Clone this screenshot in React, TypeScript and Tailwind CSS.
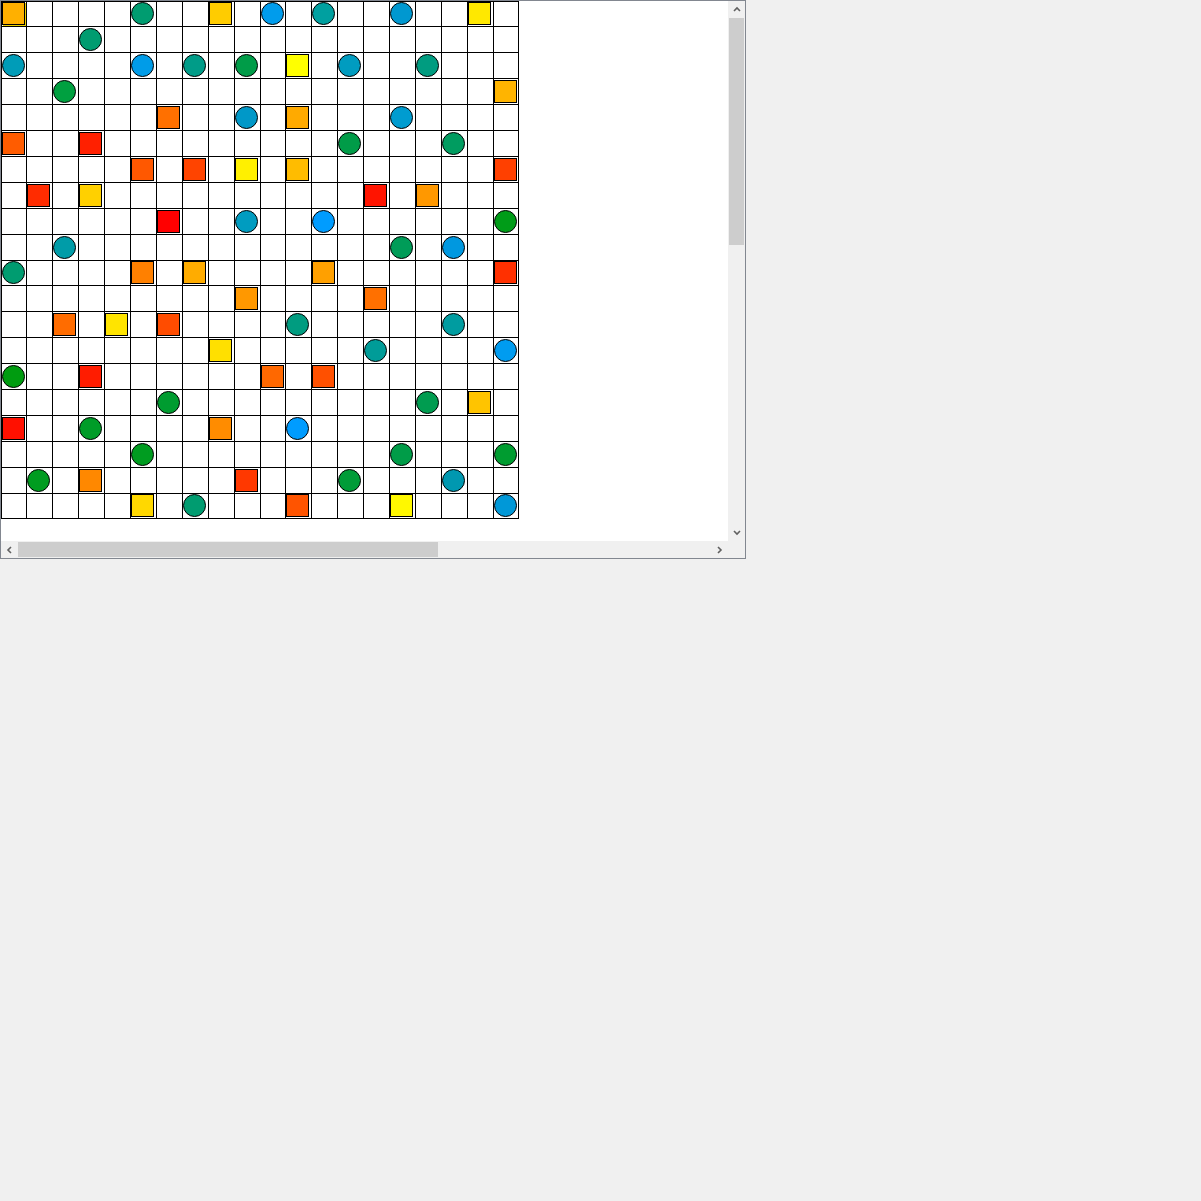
import React from "react";

type Cell = { kind: "sq" | "ci"; color: string } | null;

// row, col, kind, colour
const pieces: [number, number, "sq" | "ci", string][] = [
  [0, 0, "sq", "#ffb000"], [0, 5, "ci", "#009c70"], [0, 8, "sq", "#ffcc00"], [0, 10, "ci", "#009cec"],
  [0, 12, "ci", "#00a0a0"], [0, 15, "ci", "#0098d0"], [0, 18, "sq", "#ffe800"],
  [1, 3, "ci", "#009c70"],
  [2, 0, "ci", "#009cb8"], [2, 5, "ci", "#009ce8"], [2, 7, "ci", "#009c88"], [2, 9, "ci", "#009c48"],
  [2, 11, "sq", "#ffff00"], [2, 13, "ci", "#009cc0"], [2, 16, "ci", "#009c80"],
  [3, 2, "ci", "#00a040"], [3, 19, "sq", "#ffb400"],
  [4, 6, "sq", "#ff7000"], [4, 9, "ci", "#0098c8"], [4, 11, "sq", "#ffaa00"], [4, 15, "ci", "#009cd0"],
  [5, 0, "sq", "#ff5c00"], [5, 3, "sq", "#ff2000"], [5, 13, "ci", "#009c48"], [5, 17, "ci", "#009c60"],
  [6, 5, "sq", "#ff5800"], [6, 7, "sq", "#ff4400"], [6, 9, "sq", "#fff000"], [6, 11, "sq", "#ffbc00"],
  [6, 19, "sq", "#ff4000"],
  [7, 1, "sq", "#ff2c00"], [7, 3, "sq", "#ffd000"], [7, 14, "sq", "#ff1400"], [7, 16, "sq", "#ff9800"],
  [8, 6, "sq", "#ff0000"], [8, 9, "ci", "#009cc0"], [8, 12, "ci", "#009cff"], [8, 19, "ci", "#009c18"],
  [9, 2, "ci", "#009ca8"], [9, 15, "ci", "#009c58"], [9, 17, "ci", "#0098e0"],
  [10, 0, "ci", "#009c70"], [10, 5, "sq", "#ff8000"], [10, 7, "sq", "#ffac00"], [10, 12, "sq", "#ffa000"],
  [10, 19, "sq", "#ff3000"],
  [11, 9, "sq", "#ff9800"], [11, 14, "sq", "#ff7000"],
  [12, 2, "sq", "#ff6c00"], [12, 4, "sq", "#ffe400"], [12, 6, "sq", "#ff4c00"], [12, 11, "ci", "#009c80"],
  [12, 17, "ci", "#009ca0"],
  [13, 8, "sq", "#ffe000"], [13, 14, "ci", "#009c98"], [13, 19, "ci", "#009cf0"],
  [14, 0, "ci", "#009c10"], [14, 3, "sq", "#ff1c00"], [14, 10, "sq", "#ff6800"], [14, 12, "sq", "#ff5000"],
  [15, 6, "ci", "#009c30"], [15, 16, "ci", "#009c50"], [15, 18, "sq", "#ffc400"],
  [16, 0, "sq", "#ff1000"], [16, 3, "ci", "#009c28"], [16, 8, "sq", "#ff8c00"], [16, 11, "ci", "#009cff"],
  [17, 5, "ci", "#009c20"], [17, 15, "ci", "#009c48"], [17, 19, "ci", "#009c30"],
  [18, 1, "ci", "#009c20"], [18, 3, "sq", "#ff8800"], [18, 9, "sq", "#ff3800"], [18, 13, "ci", "#009c38"],
  [18, 17, "ci", "#0098b0"],
  [19, 5, "sq", "#ffd800"], [19, 7, "ci", "#009c70"], [19, 11, "sq", "#ff5400"], [19, 15, "sq", "#fff800"],
  [19, 19, "ci", "#0098d8"],
];

const board: Cell[][] = Array.from({ length: 20 }, () => Array<Cell>(20).fill(null));
pieces.forEach(([r, c, kind, color]) => {
  board[r][c] = { kind, color };
});

// the 24px rows keep their piece flush to the top line
const shortRows = [0, 10, 19];

function Chevron({ dir }: { dir: "up" | "down" | "left" | "right" }) {
  const pts = {
    up: "1,5 4,2 7,5",
    down: "1,2 4,5 7,2",
    left: "5,1 2,4 5,7",
    right: "2,1 5,4 2,7",
  }[dir];
  return (
    <svg width="8" height="8" viewBox="0 0 8 8" fill="none">
      <polyline points={pts} stroke="#606060" strokeWidth="1.6" />
    </svg>
  );
}

export default function App() {
  return (
    <div className="min-h-screen bg-[#f0f0f0]">
      <div className="w-[746px] h-[559px] border border-[#828790] bg-white flex flex-col">
        <div className="flex flex-1 min-h-0">
          <div className="flex-1 overflow-hidden">
            {/* 20 x 20 board; cells are ~25.9px so a few tracks are a pixel short */}
            <div className="grid grid-cols-[24px_repeat(9,25px)_24px_repeat(8,25px)_24px] grid-rows-[24px_repeat(9,25px)_24px_repeat(8,25px)_24px] gap-px p-px bg-black w-[518px]">
              {board.map((row, r) =>
                row.map((cell, c) => (
                  <div
                    key={`${r}-${c}`}
                    className={`flex justify-start bg-white ${shortRows.includes(r) ? "items-start" : "items-center"}`}
                  >
                    {cell && (
                      <div
                        className={`w-[23px] h-[23px] shrink-0 border border-black ${cell.kind === "ci" ? "rounded-full" : ""} ${r === 0 && c === 0 ? "shadow-[1px_1px_0_#e8d000]" : ""}`}
                        style={{ backgroundColor: cell.color }}
                      />
                    )}
                  </div>
                ))
              )}
            </div>
          </div>
          <div className="w-[17px] bg-[#f0f0f0] flex flex-col">
            <div className="h-[17px] flex items-center justify-center">
              <Chevron dir="up" />
            </div>
            <div className="flex-1 flex flex-col px-px">
              <div className="h-[227px] bg-[#cdcdcd]" />
            </div>
            <div className="h-[17px] flex items-center justify-center">
              <Chevron dir="down" />
            </div>
          </div>
        </div>
        <div className="h-[17px] flex">
          <div className="flex-1 bg-[#f0f0f0] flex">
            <div className="w-[17px] flex items-center justify-center">
              <Chevron dir="left" />
            </div>
            <div className="flex-1 py-px">
              <div className="w-[420px] h-full bg-[#cdcdcd]" />
            </div>
            <div className="w-[17px] flex items-center justify-center">
              <Chevron dir="right" />
            </div>
          </div>
          <div className="w-[17px] bg-[#f0f0f0]" />
        </div>
      </div>
    </div>
  );
}
